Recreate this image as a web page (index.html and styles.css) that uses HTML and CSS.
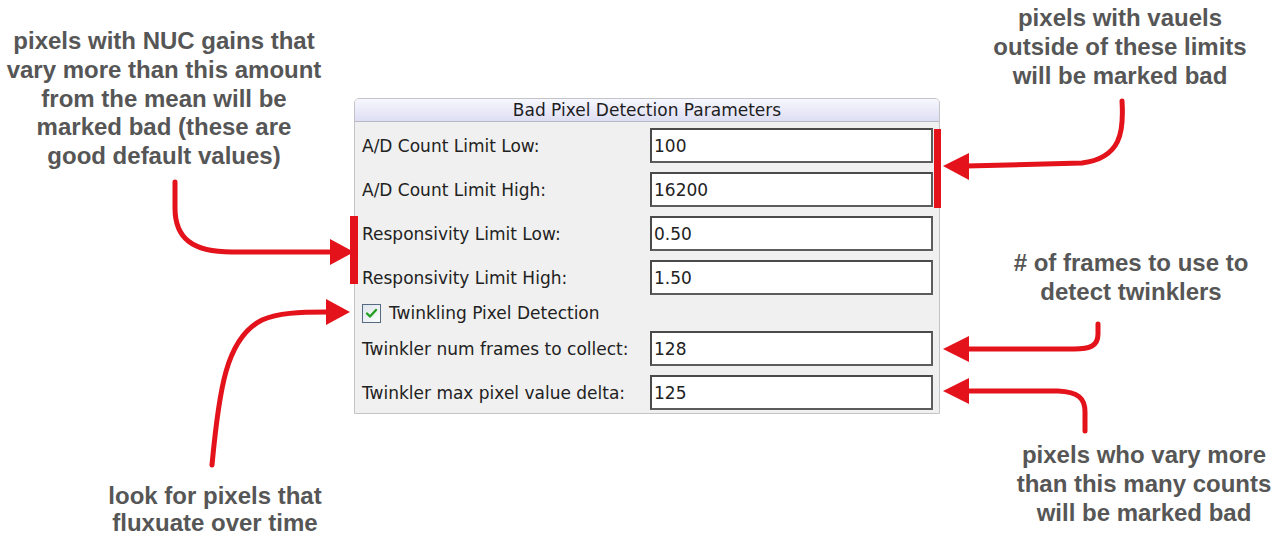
FILE: index.html
```html
<!DOCTYPE html>
<html>
<head>
    <title>Bad Pixel Detection Parameters</title>
    <link rel="stylesheet" href="styles.css">
</head>
<body>
    <div class="canvas">
        <div class="panel">
            <div class="panel-title">Bad Pixel Detection Parameters</div>
            <div class="panel-body">
                <label class="field-label">A/D Count Limit Low:</label>
                <input class="field" type="text" value="100">

                <label class="field-label">A/D Count Limit High:</label>
                <input class="field" type="text" value="16200">

                <label class="field-label">Responsivity Limit Low:</label>
                <input class="field" type="text" value="0.50">

                <label class="field-label">Responsivity Limit High:</label>
                <input class="field" type="text" value="1.50">

                <div class="check-row">
                    <span class="checkbox">
                        <svg width="13" height="13" viewBox="0 0 13 13">
                            <path d="M2 6.5 L5 9.5 L11 3" fill="none" stroke="#22a022" stroke-width="2.4" stroke-linecap="round" stroke-linejoin="round"/>
                        </svg>
                    </span>
                    <span>Twinkling Pixel Detection</span>
                </div>

                <label class="field-label">Twinkler num frames to collect:</label>
                <input class="field" type="text" value="128">

                <label class="field-label">Twinkler max pixel value delta:</label>
                <input class="field" type="text" value="125">
            </div>
        </div>

        <!-- callout notes -->
        <div class="note note-gains">pixels with NUC gains that vary more than this amount from the mean will be marked bad (these are good default values)</div>
        <div class="note note-limits">pixels with vauels outside of these limits will be marked bad</div>
        <div class="note note-frames"># of frames to use to detect twinklers</div>
        <div class="note note-delta">pixels who vary more than this many counts will be marked bad</div>
        <div class="note note-twinkle">look for pixels that fluxuate over time</div>

        <!-- red brackets and arrows -->
        <svg class="arrows" width="1273" height="537" viewBox="0 0 1273 537">
            <g fill="none" stroke="#e3121b" stroke-width="5" stroke-linecap="round">
                <path d="M175 182 V208 C175 238 192 252 232 252 H334"/>
                <path d="M212 465 C219 390 226 338 262 320 C278 313 298 312 328 312"/>
                <path d="M1122 101 C1124 132 1121 158 1082 163 L966 166"/>
                <path d="M1098 324 V334 C1098 346 1090 349 1074 349 H966"/>
                <path d="M1085 431 V412 C1085 398 1078 392 1058 391 H966"/>
            </g>
            <g fill="#e3121b">
                <rect x="934" y="129" width="7" height="79"/>
                <rect x="350" y="216" width="8" height="68"/>
                <polygon points="330,239 354,252 330,265"/>
                <polygon points="326,299 350,312 326,325"/>
                <polygon points="969,153 943,166 969,180"/>
                <polygon points="969,336 943,349 969,362"/>
                <polygon points="969,378 943,391 969,404"/>
            </g>
        </svg>
    </div>
</body>
</html>
```

FILE: styles.css
```css
body {
    margin: 0;
    background-color: #fff;
    font-family: "DejaVu Sans", Verdana, sans-serif;
}

.canvas {
    position: relative;
    width: 1273px;
    height: 537px;
    overflow: hidden;
}

/* dialog group box */
.panel {
    width: 586px;
    margin: 98px 0 0 354px;
    box-sizing: border-box;
    border: 1px solid #c4c4c8;
    border-radius: 5px 5px 0 0;
    background-color: #f0f0f0;
}

.panel-title {
    height: 22px;
    line-height: 22px;
    text-align: center;
    font-size: 17px;
    color: #1e1e1e;
    background: linear-gradient(#f7f7fe, #dedef3);
    border-bottom: 1px solid #b9b9c9;
    border-radius: 4px 4px 0 0;
}

.panel-body {
    display: grid;
    grid-template-columns: 288px 1fr;
    row-gap: 9px;
    padding: 6px 6px 3px 7px;
}

.field-label {
    display: flex;
    align-items: center;
    height: 35px;
    font-size: 17px;
    color: #222;
}

.field {
    height: 35px;
    box-sizing: border-box;
    margin: 0;
    padding: 0 0 0 2px;
    border: 2px solid #4a4a4a;
    border-right-color: #5c5c5c;
    border-bottom-color: #5c5c5c;
    background-color: #fff;
    font-family: "DejaVu Sans", Verdana, sans-serif;
    font-size: 17px;
    color: #222;
    outline: none;
}

.check-row {
    grid-column: 1 / 3;
    display: flex;
    align-items: center;
    gap: 8px;
    height: 18px;
    font-size: 17px;
    color: #222;
}

.checkbox {
    display: flex;
    align-items: center;
    justify-content: center;
    width: 19px;
    height: 19px;
    box-sizing: border-box;
    border: 1px solid #566a82;
    background: linear-gradient(135deg, #dfe6ec, #fbfcfd);
}

/* annotations */
.note {
    position: absolute;
    text-align: center;
    font-family: "Liberation Sans", Arial, sans-serif;
    font-weight: bold;
    font-size: 24px;
    line-height: 28.8px;
    color: #565656;
}

.note-gains {
    left: 4px;
    top: 27px;
    width: 320px;
}

.note-limits {
    left: 975px;
    top: 4px;
    width: 290px;
}

.note-frames {
    left: 986px;
    top: 249px;
    width: 290px;
}

.note-delta {
    left: 1009px;
    top: 441px;
    width: 270px;
}

.note-twinkle {
    left: 90px;
    top: 482px;
    width: 250px;
    line-height: 27px;
}

.arrows {
    position: absolute;
    left: 0;
    top: 0;
}
```
